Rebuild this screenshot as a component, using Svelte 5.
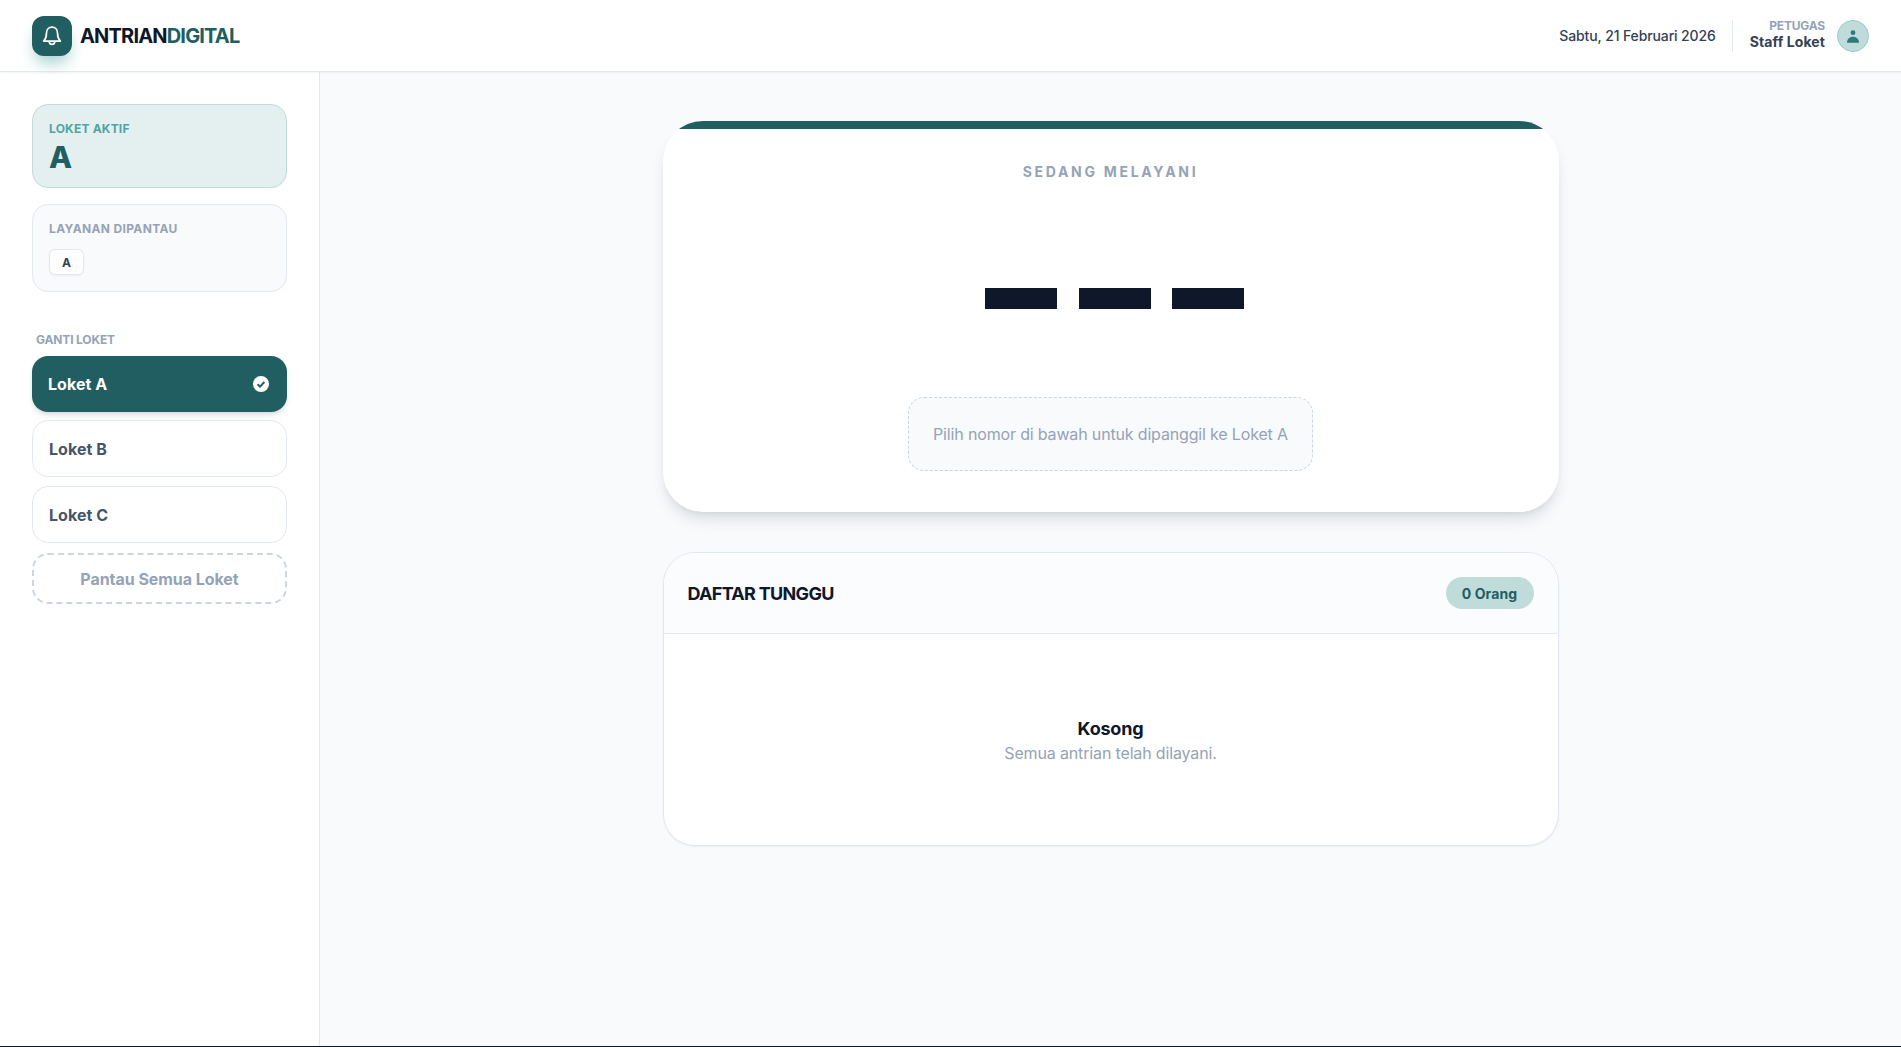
<script>
  let counters = ["Loket B", "Loket C"]
</script>

<div class="page">
  <header class="topbar">
    <div class="brand">
      <div class="logo">
        <svg width="24" height="24" viewBox="0 0 24 24" fill="none" stroke="#fff" stroke-width="1.7" stroke-linecap="round" stroke-linejoin="round">
          <path d="M12 3.2c-3.3 0-5.5 2.6-5.5 5.8 0 3.6-.9 6.2-2.8 8.2h16.6c-1.9-2-2.8-4.6-2.8-8.2 0-3.2-2.2-5.8-5.5-5.8z"/>
          <path d="M9.2 17.5a2.8 2.8 0 0 0 5.6 0"/>
        </svg>
      </div>
      <span class="brand-name">ANTRIAN<span class="accent">DIGITAL</span></span>
    </div>
    <div class="top-right">
      <span class="date">Sabtu, 21 Februari 2026</span>
      <div class="divider"></div>
      <div class="user">
        <span class="role">PETUGAS</span>
        <span class="staff">Staff Loket</span>
      </div>
      <div class="avatar">
        <svg width="14" height="14" viewBox="0 0 14 14" fill="#2d7a7c">
          <circle cx="7" cy="3.7" r="2.4"/>
          <path d="M1 13.7c0-3.6 2.4-6 6-6s6 2.4 6 6z"/>
        </svg>
      </div>
    </div>
  </header>

  <div class="body">
    <aside class="sidebar">
      <div class="active-card">
        <div class="active-label">LOKET AKTIF</div>
        <div class="active-value">A</div>
      </div>
      <div class="watch-card">
        <div class="watch-label">LAYANAN DIPANTAU</div>
        <span class="chip">A</span>
      </div>
      <div class="section-label">GANTI LOKET</div>
      <div class="counter-list">
        <button class="counter selected">
          <span>Loket A</span>
          <svg width="16" height="16" viewBox="0 0 16 16">
            <circle cx="8" cy="8" r="8" fill="#fff"/>
            <path d="M4.6 8.2l2.4 2.4 4.4-4.6" fill="none" stroke="#215e61" stroke-width="2"/>
          </svg>
        </button>
        {#each counters as c}
          <button class="counter">{c}</button>
        {/each}
        <button class="monitor-all">Pantau Semua Loket</button>
      </div>
    </aside>

    <main class="main">
      <section class="serving">
        <div class="serving-bar"></div>
        <div class="serving-label">SEDANG MELAYANI</div>
        <div class="dashes"><i></i><i></i><i></i></div>
        <div class="hint">Pilih nomor di bawah untuk dipanggil ke Loket A</div>
      </section>

      <section class="queue">
        <div class="queue-head">
          <h2>DAFTAR TUNGGU</h2>
          <span class="count">0 Orang</span>
        </div>
        <div class="empty">
          <div class="empty-title">Kosong</div>
          <div class="empty-sub">Semua antrian telah dilayani.</div>
        </div>
      </section>
    </main>
  </div>
</div>

<style>
  :global(body) {
    margin: 0;
    background: #f8fafc;
    font-family: Inter, "Liberation Sans", sans-serif;
  }

  .page {
    height: 1047px;
    display: flex;
    flex-direction: column;
    box-sizing: border-box;
    border-bottom: 1px solid #0f172a;
  }

  .topbar {
    height: 72px;
    flex: none;
    box-sizing: border-box;
    display: flex;
    align-items: center;
    justify-content: space-between;
    padding: 0 32px;
    background: #fff;
    border-bottom: 1px solid #e2e8f0;
    box-shadow: 0 1px 2px rgba(15, 23, 42, 0.05);
    position: relative;
    z-index: 1;
  }

  .brand {
    display: flex;
    align-items: center;
    gap: 8px;
  }

  .logo {
    width: 40px;
    height: 40px;
    border-radius: 12px;
    background: #215e61;
    display: flex;
    align-items: center;
    justify-content: center;
    box-shadow: 0 10px 15px -3px #a9d2d0;
  }

  .brand-name {
    font-size: 20px;
    font-weight: 700;
    letter-spacing: -0.82px;
    color: #0f172a;
  }

  .accent {
    color: #215e61;
  }

  .top-right {
    display: flex;
    align-items: center;
  }

  .date {
    font-size: 14px;
    font-weight: 500;
    letter-spacing: -0.12px;
    color: #334155;
  }

  .divider {
    width: 1px;
    height: 32px;
    background: #e2e8f0;
    margin: 0 17px 0 16px;
  }

  .user {
    display: flex;
    flex-direction: column;
    align-items: flex-end;
    margin-right: 12px;
    padding-bottom: 2px;
  }

  .role {
    font-size: 12px;
    line-height: 14px;
    font-weight: 700;
    letter-spacing: -0.2px;
    color: #94a3b8;
  }

  .staff {
    font-size: 14px;
    line-height: 18px;
    font-weight: 700;
    letter-spacing: 0.1px;
    color: #334155;
  }

  .avatar {
    width: 32px;
    height: 32px;
    box-sizing: border-box;
    border-radius: 50%;
    background: #bfdcdb;
    border: 1px solid #9ccbc9;
    display: flex;
    align-items: center;
    justify-content: center;
  }

  .body {
    flex: 1;
    display: flex;
    min-height: 0;
  }

  .sidebar {
    width: 320px;
    flex: none;
    box-sizing: border-box;
    padding: 32px;
    background: #fff;
    border-right: 1px solid #e2e8f0;
  }

  .active-card {
    height: 84px;
    box-sizing: border-box;
    padding: 16px;
    background: #e4f0ef;
    border: 1px solid #bfdcdb;
    border-radius: 16px;
  }

  .active-label {
    font-size: 12px;
    line-height: 16px;
    font-weight: 700;
    letter-spacing: 0.2px;
    color: #4ea5a3;
  }

  .active-value {
    font-size: 30px;
    line-height: 32px;
    font-weight: 800;
    color: #215e61;
    padding-top: 4px;
  }

  .watch-card {
    height: 88px;
    box-sizing: border-box;
    margin-top: 16px;
    padding: 16px;
    background: #f8fafc;
    border: 1px solid #e2e8f0;
    border-radius: 16px;
  }

  .watch-label {
    font-size: 12px;
    line-height: 16px;
    font-weight: 700;
    letter-spacing: 0.35px;
    color: #94a3b8;
    margin-bottom: 12px;
  }

  .chip {
    display: inline-flex;
    align-items: center;
    justify-content: center;
    width: 35px;
    height: 26px;
    box-sizing: border-box;
    background: #fff;
    border: 1px solid #e2e8f0;
    border-radius: 6px;
    font-size: 12px;
    font-weight: 700;
    color: #334155;
    box-shadow: 0 1px 2px rgba(15, 23, 42, 0.05);
  }

  .section-label {
    margin: 40px 0 8px 4px;
    font-size: 12px;
    line-height: 16px;
    font-weight: 700;
    letter-spacing: -0.15px;
    color: #94a3b8;
  }

  .counter-list {
    display: flex;
    flex-direction: column;
    gap: 9px;
  }

  .counter,
  .monitor-all {
    font-family: inherit;
    font-size: 16px;
    font-weight: 700;
    letter-spacing: 0.05px;
    box-sizing: border-box;
    width: 100%;
  }

  .counter {
    height: 57px;
    display: flex;
    align-items: center;
    justify-content: space-between;
    padding: 0 16px;
    background: #fff;
    color: #475569;
    border: 1px solid #e2e8f0;
    border-radius: 16px;
  }

  .counter.selected {
    height: 56px;
    margin-bottom: -1px;
    padding-right: 18px;
    background: #215e61;
    color: #fff;
    border: none;
    box-shadow: 0 4px 6px -1px rgba(15, 23, 42, 0.12), 0 2px 4px -2px rgba(15, 23, 42, 0.1);
  }

  .monitor-all {
    height: 51px;
    margin-top: 1px;
    background: transparent;
    color: #94a3b8;
    border: 2px dashed #cbd5e1;
    border-radius: 16px;
    letter-spacing: -0.05px;
  }

  .main {
    flex: 1;
    display: flex;
    flex-direction: column;
    align-items: center;
    padding-top: 49px;
    gap: 40px;
  }

  .serving {
    width: 896px;
    height: 391px;
    box-sizing: border-box;
    background: #fff;
    border-radius: 40px;
    overflow: hidden;
    box-shadow: 0 10px 15px -3px rgba(15, 23, 42, 0.12), 0 4px 6px -4px rgba(15, 23, 42, 0.1);
    display: flex;
    flex-direction: column;
    align-items: center;
  }

  .serving-bar {
    width: 100%;
    height: 8px;
    flex: none;
    background: #215e61;
    margin-bottom: 34px;
  }

  .serving-label {
    font-size: 14px;
    line-height: 18px;
    font-weight: 700;
    letter-spacing: 2.7px;
    color: #94a3b8;
  }

  .dashes {
    display: flex;
    gap: 21.5px;
    margin-top: 107px;
    margin-left: 8px;
  }

  .dashes i {
    display: block;
    width: 72px;
    height: 21px;
    background: #0f172a;
  }

  .hint {
    margin-top: 88px;
    width: 405px;
    height: 74px;
    box-sizing: border-box;
    display: flex;
    align-items: center;
    justify-content: center;
    background: #f8fafc;
    border: 1px dashed #cbd5e1;
    border-radius: 16px;
    font-size: 16px;
    letter-spacing: -0.16px;
    color: #94a3b8;
  }

  .queue {
    width: 896px;
    height: 294px;
    box-sizing: border-box;
    background: #fff;
    border: 1px solid #e2e8f0;
    border-radius: 32px;
    overflow: hidden;
    box-shadow: 0 1px 2px rgba(15, 23, 42, 0.05);
  }

  .queue-head {
    height: 81px;
    box-sizing: border-box;
    display: flex;
    align-items: center;
    justify-content: space-between;
    padding: 0 24px;
    background: #fbfcfe;
    border-bottom: 1px solid #e2e8f0;
  }

  h2 {
    margin: 0;
    font-size: 18px;
    font-weight: 700;
    letter-spacing: -0.7px;
    color: #0f172a;
  }

  .count {
    width: 88px;
    height: 32px;
    display: flex;
    align-items: center;
    justify-content: center;
    background: #bfdcdb;
    border-radius: 16px;
    font-size: 14px;
    font-weight: 700;
    letter-spacing: 0.1px;
    color: #215e61;
  }

  .empty {
    padding-top: 82px;
    text-align: center;
  }

  .empty-title {
    font-size: 18px;
    line-height: 25px;
    font-weight: 700;
    letter-spacing: -0.2px;
    color: #0f172a;
  }

  .empty-sub {
    font-size: 16px;
    line-height: 25px;
    letter-spacing: -0.15px;
    color: #94a3b8;
  }
</style>
